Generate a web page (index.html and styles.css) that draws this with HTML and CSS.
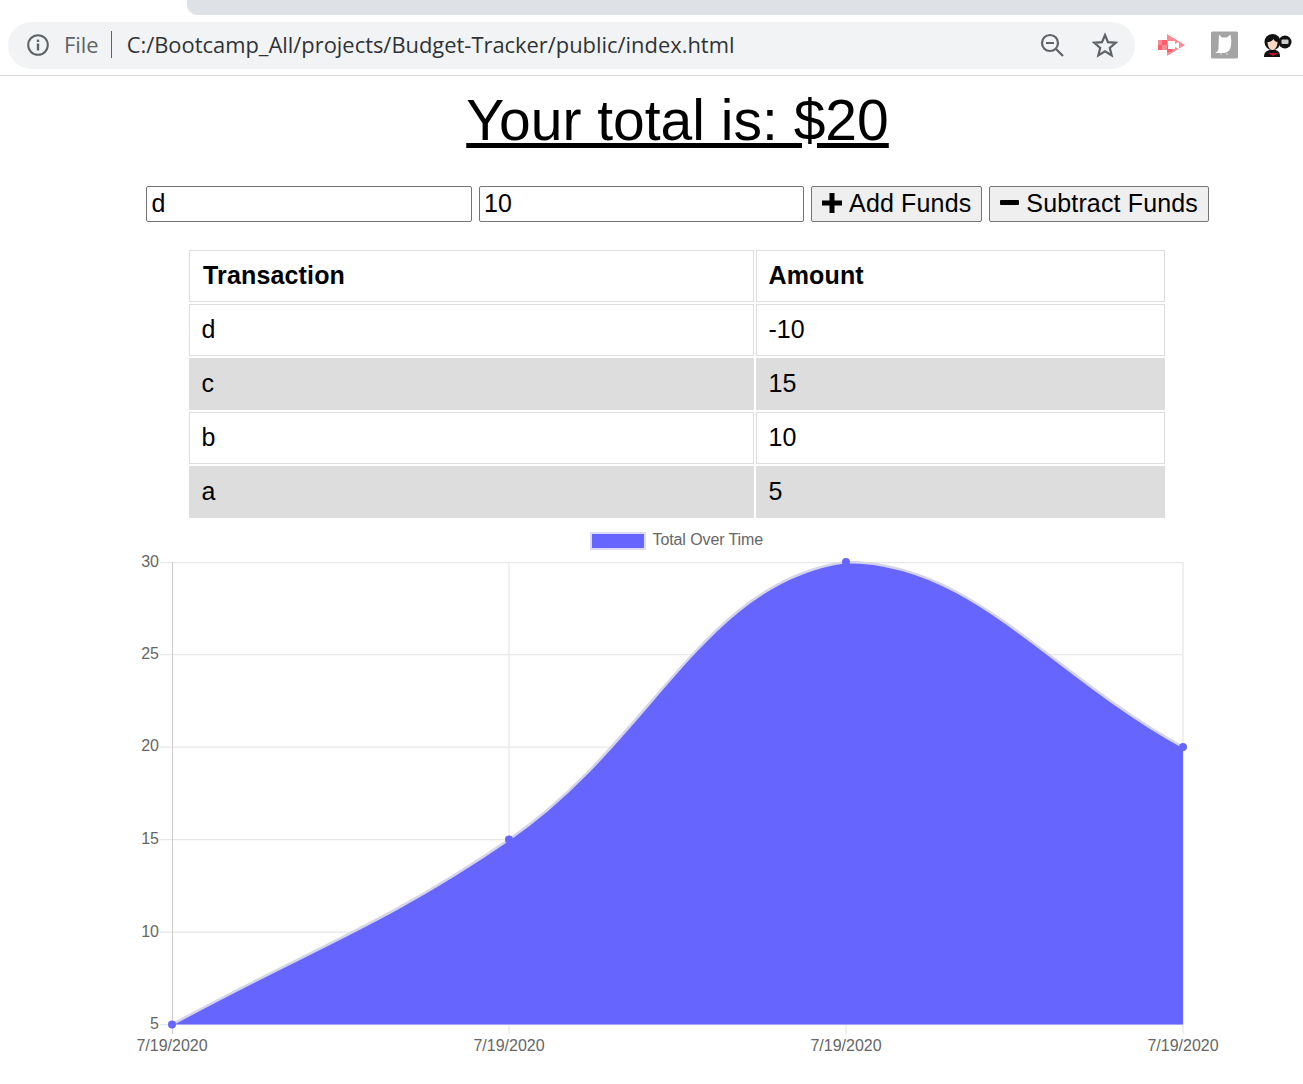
FILE: index.html
```html
<!DOCTYPE html>
<html lang="en">
<head>
    <meta charset="UTF-8">
    <title>Budget Tracker</title>
    <link rel="stylesheet" href="styles.css">
</head>
<body>

    <!-- Browser chrome -->
    <div class="tab-strip"><div class="tab"></div></div>
    <div class="toolbar">
        <div class="omnibox">
            <svg class="info-icon" width="24" height="24" viewBox="0 0 24 24">
                <circle cx="12" cy="12" r="9.8" fill="none" stroke="#5f6368" stroke-width="2"/>
                <rect x="10.8" y="10.5" width="2.4" height="7" fill="#5f6368"/>
                <rect x="10.8" y="6.6" width="2.4" height="2.4" fill="#5f6368"/>
            </svg>
            <span class="scheme">File</span>
            <span class="url">C:/Bootcamp_All/projects/Budget-Tracker/public/index.html</span>
            <svg class="zoom-icon" width="24" height="24" viewBox="0 0 24 24">
                <circle cx="10" cy="10" r="8" fill="none" stroke="#5f6368" stroke-width="2.2"/>
                <path d="M6 10h8M16 16l7 7" fill="none" stroke="#5f6368" stroke-width="2.2"/>
            </svg>
            <svg class="star-icon" width="26" height="26" viewBox="0 0 26 26">
                <path d="M13 3l3 7.2 7.8.6-6 5.1 1.9 7.6L13 19.4l-6.700 4.100 1.900-7.600-6-5.100 7.800-.6z" fill="none" stroke="#5f6368" stroke-width="2.2" stroke-linejoin="miter"/>
            </svg>
        </div>
        <div class="extensions">
            <svg width="28" height="22" viewBox="0 0 28 22">
                <rect x="0" y="6" width="9" height="10" fill="#ff8a94"/>
                <path d="M9 0l18 11L9 22z" fill="#ff8a94"/>
                <path d="M4 6h5v5H4zM0 11h4v5H0zM9 11h5v7H9z" fill="#ff5f6d"/>
                <path d="M10 7h7v8h-7zM17 10l4-2v7l-4-2z" fill="#fff"/>
            </svg>
            <svg width="28" height="28" viewBox="1 0 28 28">
                <rect x="1" y=".5" width="27" height="27" rx="1.500" fill="#a4a4a4"/>
                <path d="M9 3.500l3 3h5l3.500-3c1 5 1 10 0 13-1 4-4 5.500-8 5.500H5c3-1 3.500-3 3.500-6z" fill="#fff"/>
                <path d="M11 22v2M17 22v2" stroke="#ddd" stroke-width="1"/>
            </svg>
            <svg width="30" height="26" viewBox="2 0 30 26">
                <path d="M2 25c0-5 3-7 7-7h3c4 0 6 2 6 7z" fill="#111"/>
                <path d="M6 21h10l-5 3z" fill="#c8102e"/>
                <circle cx="10.500" cy="10" r="8" fill="#111"/>
                <path d="M5.500 10c2 0 5-1 6-3 1 2 2 3 4 3 0 4-2 8-5 8s-5-4-5-8z" fill="#f8d8c4"/>
                <circle cx="23" cy="10" r="6.500" fill="#111"/>
                <rect x="19.500" y="7.500" width="7" height="4.500" rx="1" fill="#ccc"/>
            </svg>
        </div>
    </div>

    <!-- App -->
    <main class="page">
        <h1 class="total">Your total is: $20</h1>

        <form class="entry-form">
            <input type="text" class="entry-input" value="d">
            <input type="text" class="entry-input" value="10">
            <button type="button" class="entry-btn add-btn">
                <svg width="20" height="20" viewBox="0 0 20 20"><path d="M7.500 0h5v7.500H20v5h-7.500V20h-5v-7.500H0v-5h7.500z"/></svg>
                Add Funds
            </button>
            <button type="button" class="entry-btn">
                <svg width="19" height="20" viewBox="0 0 19 20"><rect y="7" width="19" height="5" rx="1"/></svg>
                Subtract Funds
            </button>
        </form>

        <table class="transactions">
            <thead>
                <tr><th class="col-name">Transaction</th><th>Amount</th></tr>
            </thead>
            <tbody>
                <tr><td>d</td><td>-10</td></tr>
                <tr><td>c</td><td>15</td></tr>
                <tr><td>b</td><td>10</td></tr>
                <tr><td>a</td><td>5</td></tr>
            </tbody>
        </table>
    </main>

    <!-- Chart, viewBox is in page pixels -->
    <svg class="chart" width="1303" height="559" viewBox="0 525 1303 559">
        <rect class="legend-box" x="591" y="533" width="54" height="16"/>
        <text class="legend-label" x="652.500" y="545">Total Over Time</text>

        <path class="grid" d="M160 562.500H1183M160 654.500H1183M160 747H1183M160 839.500H1183M160 932H1183M160 1024.500H1183"/>
        <path class="grid" d="M509 562V1034M846 562V1034M1183 562V1034"/>
        <path class="axis" d="M172.500 562V1034"/>

        <text class="y-label" x="159" y="567">30</text>
        <text class="y-label" x="159" y="659">25</text>
        <text class="y-label" x="159" y="751">20</text>
        <text class="y-label" x="159" y="844">15</text>
        <text class="y-label" x="159" y="937">10</text>
        <text class="y-label" x="159" y="1029">5</text>

        <text class="x-label" x="172" y="1051">7/19/2020</text>
        <text class="x-label" x="509" y="1051">7/19/2020</text>
        <text class="x-label" x="846" y="1051">7/19/2020</text>
        <text class="x-label" x="1183" y="1051">7/19/2020</text>

        <path class="area" d="M172 1024.500C306.800 950.500 382.900 926 509 839.500C652.500 741 702.500 581.700 846 562C972.100 562 1048.200 673 1183 747V1024.500Z"/>
        <path class="area-line" d="M172 1024.500C306.800 950.500 382.900 926 509 839.500C652.500 741 702.500 581.700 846 562C972.100 562 1048.200 673 1183 747"/>

        <circle class="dot" cx="172" cy="1024.500" r="4"/>
        <circle class="dot" cx="509" cy="839.500" r="4"/>
        <circle class="dot" cx="846" cy="562" r="4"/>
        <circle class="dot" cx="1183" cy="747" r="4"/>
    </svg>

</body>
</html>
```

FILE: styles.css
```css
html, body {
    margin: 0;
    padding: 0;
    background-color: #fff;
    overflow: hidden;
}

body {
    font-family: "Liberation Sans", Arial, sans-serif;
    color: #000;
}

/* Browser chrome */
.tab-strip {
    height: 15px;
    padding-left: 187px;
}

.tab {
    height: 15px;
    background-color: #dee1e6;
    border-bottom-left-radius: 10px;
}

.toolbar {
    display: flex;
    align-items: center;
    height: 60px;
    padding: 0 0 0 8px;
    border-bottom: 1px solid #d9d9d9;
}

.omnibox {
    display: flex;
    align-items: center;
    box-sizing: border-box;
    width: 1127px;
    height: 47px;
    margin-top: 1px;
    padding: 0 17px 2px 18px;
    background-color: #f1f3f4;
    border-radius: 24px;
    font-family: "Open Sans", "Noto Sans", sans-serif;
    font-size: 21.900px;
}

.scheme {
    margin-left: 14px;
    padding-right: 12px;
    border-right: 1px solid #5f6368;
    color: #5f6368;
    line-height: 27px;
}

.url {
    margin-left: 15px;
    flex: 1;
    color: #303336;
    white-space: nowrap;
}

.star-icon {
    margin-left: 28px;
}

.extensions {
    display: flex;
    align-items: center;
    gap: 25px;
    margin-left: 23px;
}

/* App */
.page {
    width: 1063px;
    margin-left: 146px;
}

.total {
    margin: 11px 0 33px;
    height: 66px;
    font-size: 57px;
    line-height: 66px;
    font-weight: normal;
    text-align: center;
    text-decoration: underline;
}

.entry-form {
    display: flex;
    gap: 7px;
    height: 36px;
}

.entry-input {
    box-sizing: border-box;
    flex: 1;
    min-width: 0;
    height: 36px;
    padding: 0 5px 2px 4.500px;
    border: 1px solid #767676;
    border-radius: 2px;
    font-family: inherit;
    font-size: 25px;
    color: #000;
}

.entry-btn {
    display: flex;
    align-items: center;
    gap: 7px;
    box-sizing: border-box;
    height: 36px;
    padding: 0 10px 2px;
    border: 1px solid #767676;
    border-radius: 2px;
    background-color: #efefef;
    font-family: inherit;
    font-size: 25px;
    letter-spacing: .15px;
    color: #000;
    white-space: nowrap;
}

.add-btn {
    min-width: 171px;
}

.transactions {
    width: 980px;
    margin: 26px 0 0 41px;
    border-collapse: separate;
    border-spacing: 2px;
    font-size: 25px;
    table-layout: fixed;
}

.transactions th,
.transactions td {
    box-sizing: border-box;
    height: 52px;
    padding: 0 11.500px 2px;
    border: 1px solid #ddd;
    text-align: left;
}

.transactions th {
    letter-spacing: .15px;
}

.transactions .col-name {
    width: 565px;
    padding-left: 13px;
}

.transactions tbody tr:nth-child(even) td {
    background-color: #ddd;
}

/* Chart */
.chart {
    display: block;
    margin-top: 5px;
}

.legend-box {
    fill: #6666ff;
    stroke: #dcdcf5;
    stroke-width: 2;
}

.legend-label,
.y-label,
.x-label {
    font-family: "Liberation Sans", Arial, sans-serif;
    font-size: 16px;
    fill: #666;
}

.legend-label {
    letter-spacing: -.1px;
}

.y-label {
    text-anchor: end;
}

.x-label {
    text-anchor: middle;
}

.grid {
    fill: none;
    stroke: #e8e8e8;
    stroke-width: 1.250;
}

.axis {
    fill: none;
    stroke: #ccc;
    stroke-width: 1;
}

.area {
    fill: #6666ff;
}

.area-line {
    fill: none;
    stroke: #d4d4ec;
    stroke-width: 2.500;
}

.dot {
    fill: #6666ff;
}
```
